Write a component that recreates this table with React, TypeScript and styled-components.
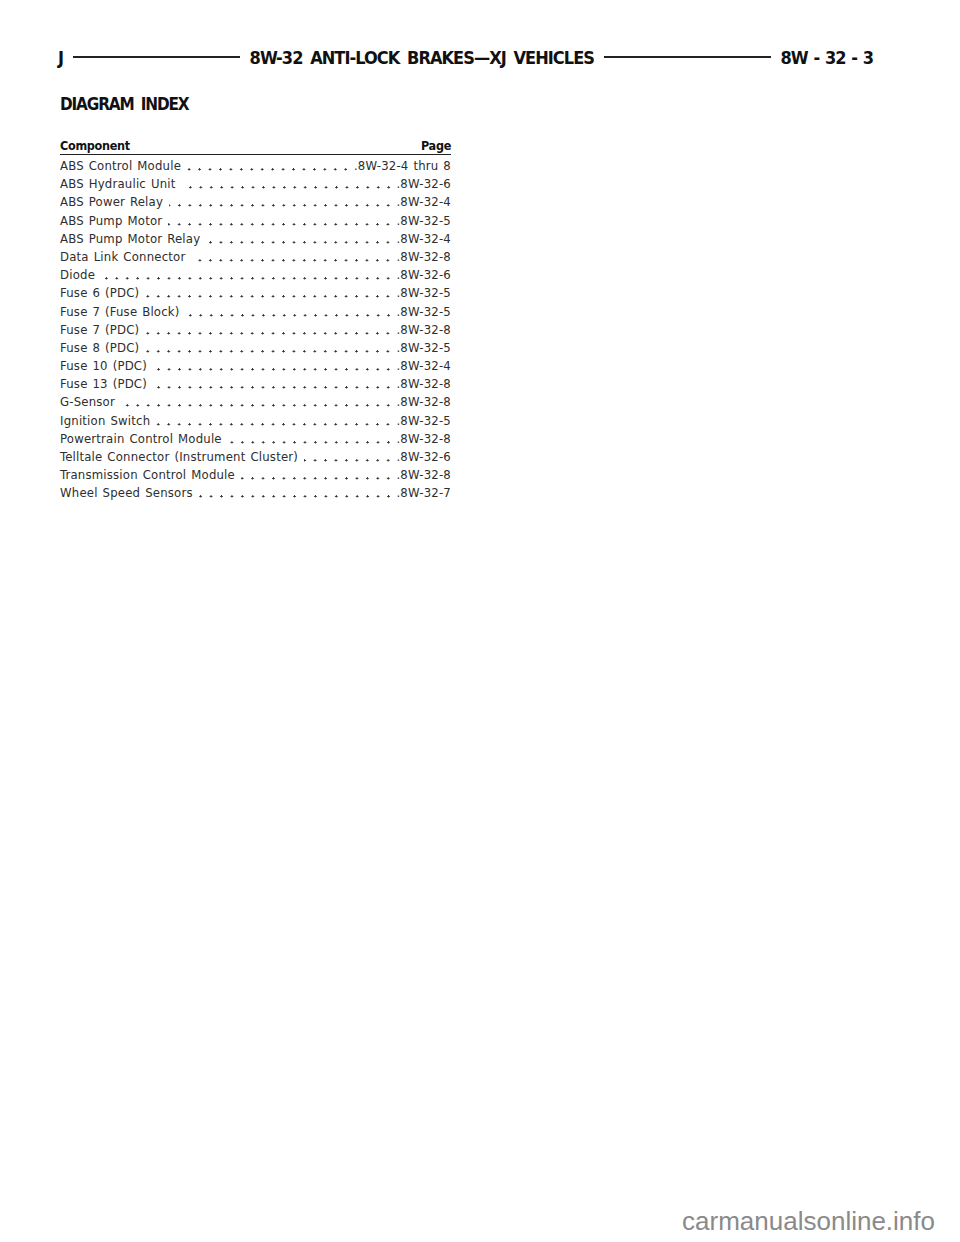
import React from "react";
import styled, { createGlobalStyle } from "styled-components";

const GlobalStyle = createGlobalStyle`
  html, body {
    margin: 0;
    padding: 0;
    background: #fff;
  }
  body {
    width: 960px;
    height: 1242px;
    font-family: "Liberation Sans Narrow", "DejaVu Sans Condensed", "Liberation Sans", sans-serif;
    color: #222;
  }
`;

const Page = styled.div`
  position: relative;
  width: 960px;
  height: 1242px;
  padding: 47px 87px 0 58px;
  box-sizing: border-box;
  display: flex;
  flex-direction: column;
`;

const RunningHead = styled.header`
  display: flex;
  align-items: center;
  gap: 8px;
  height: 20px;
  font-weight: 700;
  font-size: 18px;
  letter-spacing: -0.95px;
  color: #111;
  white-space: nowrap;
`;

const HeadRule = styled.span`
  flex: 1;
  height: 2px;
  background: #222;
  margin: 0 2px;
`;

const HeadTitle = styled.span`
  word-spacing: 3px;
`;

const PageNo = styled.span`
  word-spacing: 1px;
`;

const Title = styled.h2`
  margin: 27px 0 0 2px;
  font-size: 17px;
  font-weight: 700;
  color: #111;
  letter-spacing: -1.15px;
  word-spacing: 3px;
`;

const IndexTable = styled.div`
  width: 391px;
  margin: 24px 0 0 2px;
  display: flex;
  flex-direction: column;
`;

const HeaderRow = styled.div`
  display: flex;
  justify-content: space-between;
  font-size: 12.5px;
  font-weight: 700;
  letter-spacing: -0.3px;
  color: #111;
  padding-bottom: 1px;
  border-bottom: 1.5px solid #222;
  margin-bottom: 2px;
`;

const Row = styled.div`
  display: flex;
  height: 18.2px;
  line-height: 18px;
  font-size: 13px;
  color: #2e2e2e;
  letter-spacing: 0.2px;
  word-spacing: 1px;
  white-space: nowrap;
`;

const Leader = styled.span`
  flex: 1;
  margin: 0 3px 0 6px;
  background-image: radial-gradient(circle at 50% 12.4px, #333 0.9px, transparent 1.3px);
  background-size: 10.45px 18px;
  background-position: right top;
  background-repeat: repeat-x;
`;

const Watermark = styled.div`
  position: absolute;
  right: 25px;
  bottom: 5px;
  font-family: "Liberation Sans", Arial, sans-serif;
  font-size: 26px;
  color: #8a8a8a;
`;

const entries: [string, string][] = [
  ["ABS Control Module", ".8W-32-4 thru 8"],
  ["ABS Hydraulic Unit", ".8W-32-6"],
  ["ABS Power Relay", ".8W-32-4"],
  ["ABS Pump Motor", ".8W-32-5"],
  ["ABS Pump Motor Relay", ".8W-32-4"],
  ["Data Link Connector", ".8W-32-8"],
  ["Diode", ".8W-32-6"],
  ["Fuse 6 (PDC)", ".8W-32-5"],
  ["Fuse 7 (Fuse Block)", ".8W-32-5"],
  ["Fuse 7 (PDC)", ".8W-32-8"],
  ["Fuse 8 (PDC)", ".8W-32-5"],
  ["Fuse 10 (PDC)", ".8W-32-4"],
  ["Fuse 13 (PDC)", ".8W-32-8"],
  ["G-Sensor", ".8W-32-8"],
  ["Ignition Switch", ".8W-32-5"],
  ["Powertrain Control Module", ".8W-32-8"],
  ["Telltale Connector (Instrument Cluster)", ".8W-32-6"],
  ["Transmission Control Module", ".8W-32-8"],
  ["Wheel Speed Sensors", ".8W-32-7"],
];

export default function App() {
  return (
    <>
      <GlobalStyle />
      <Page>
        <RunningHead>
          <span>J</span>
          <HeadRule />
          <HeadTitle>8W-32 ANTI-LOCK BRAKES—XJ VEHICLES</HeadTitle>
          <HeadRule />
          <PageNo>8W - 32 - 3</PageNo>
        </RunningHead>
        <Title>DIAGRAM INDEX</Title>
        <IndexTable>
          <HeaderRow>
            <span>Component</span>
            <span>Page</span>
          </HeaderRow>
          {entries.map(([name, ref]) => (
            <Row key={name + ref}>
              <span>{name}</span>
              <Leader />
              <span>{ref}</span>
            </Row>
          ))}
        </IndexTable>
        <Watermark>carmanualsonline.info</Watermark>
      </Page>
    </>
  );
}
